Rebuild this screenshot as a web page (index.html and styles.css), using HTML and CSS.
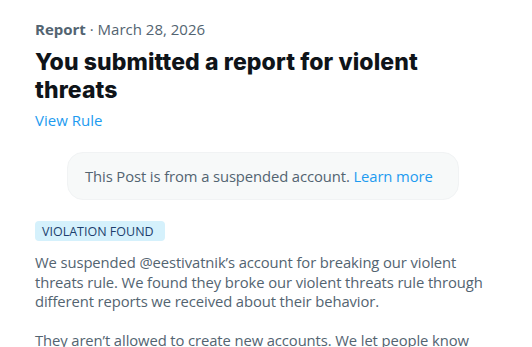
FILE: index.html
```html
<!DOCTYPE html>
<html lang="en">
<head>
<meta charset="utf-8">
<link rel="stylesheet" href="styles.css">
</head>
<body>
<main class="page">
  <div class="meta"><span class="meta-kind">Report</span> · March 28, 2026</div>
  <h1 class="title">You submitted a report for violent threats</h1>
  <a class="link rule-link" href="#">View Rule</a>
  <div class="notice">This Post is from a suspended account. <a class="link" href="#">Learn more</a></div>
  <div class="badge">VIOLATION FOUND</div>
  <p class="body-text">We suspended @eestivatnik’s account for breaking our violent threats rule. We found they broke our violent threats rule through different reports we received about their behavior.</p>
  <p class="body-text">They aren’t allowed to create new accounts. We let people know</p>
</main>
</body>
</html>
```

FILE: styles.css
```css
html, body {
  margin: 0;
  padding: 0;
  background: #ffffff;
  overflow: hidden;
}
body {
  font-family: "Segoe UI", "Open Sans", "Noto Sans", sans-serif;
  color: #536471;
}
.page {
  width: 460px;
  padding: 19px 0 0 35px;
  display: flex;
  flex-direction: column;
  align-items: flex-start;
}
.meta {
  font-size: 15px;
  line-height: 20px;
  color: #536471;
}
.meta-kind {
  font-weight: 700;
}
.title {
  margin: 9px 0 0;
  width: 440px;
  font-family: Inter, "Open Sans", sans-serif;
  font-size: 23px;
  line-height: 28px;
  font-weight: 800;
  color: #0f1419;
  letter-spacing: 0.1px;
}
.link {
  color: #1d9bf0;
  text-decoration: none;
}
.rule-link {
  margin-top: 6px;
  font-size: 15px;
  line-height: 20px;
}
.notice {
  margin: 22px 0 0 32px;
  width: 392px;
  box-sizing: border-box;
  height: 48px;
  padding: 0 17px;
  background: #f7f9f9;
  border: 1px solid #f1f3f4;
  border-radius: 16px;
  font-size: 14.8px;
  line-height: 46px;
  white-space: nowrap;
  letter-spacing: -0.1px;
  color: #536471;
}
.badge {
  margin-top: 21px;
  width: 130px;
  box-sizing: border-box;
  height: 20px;
  padding: 0 7px;
  display: flex;
  align-items: center;
  background: #d5f1fc;
  border-radius: 4px;
  font-size: 12.5px;
  color: #1d3f6e;
}
.body-text {
  margin: 12px 0 0;
  width: 450px;
  font-size: 14.8px;
  line-height: 19.5px;
  letter-spacing: -0.1px;
  color: #536471;
}
.body-text + .body-text {
  margin-top: 19px;
}
```
